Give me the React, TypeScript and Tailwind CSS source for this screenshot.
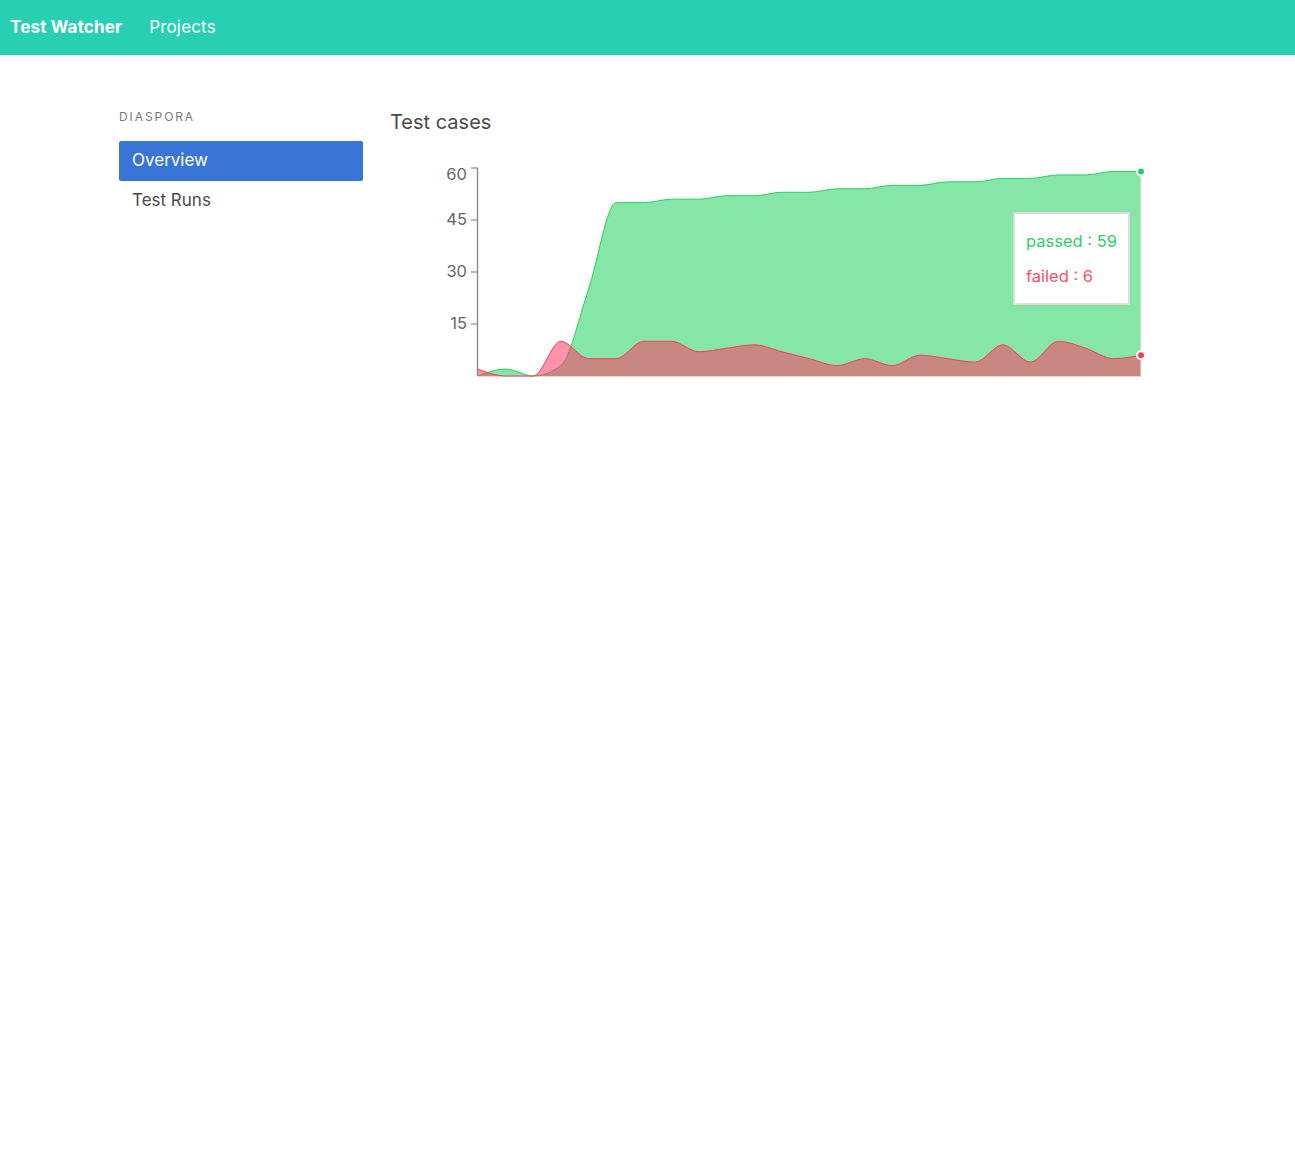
const passed = [0, 2, 0, 3, 25, 50, 50, 51, 51, 52, 52, 53, 53, 54, 54, 55, 55, 56, 56, 57, 57, 58, 58, 59, 59];
const failed = [2, 0, 0, 10, 5, 5, 10, 10, 7, 8, 9, 7, 5, 3, 5, 3, 6, 5, 4, 9, 4, 10, 8, 5, 6];

// plot box inside the svg
const X0 = 88;
const X1 = 751;
const BASE = 226;
const TOP = 18;
const PER = (BASE - TOP) / 60;

const toPoints = (values: number[]) =>
  values.map((v, i) => ({
    x: X0 + ((X1 - X0) / (values.length - 1)) * i,
    y: BASE - v * PER,
  }));

// same maths as d3 curveMonotoneX
function monotonePath(pts: { x: number; y: number }[]) {
  const n = pts.length;
  const sign = (v: number) => (v < 0 ? -1 : 1);
  const t: number[] = new Array(n).fill(0);
  for (let i = 1; i < n - 1; i++) {
    const h0 = pts[i].x - pts[i - 1].x;
    const h1 = pts[i + 1].x - pts[i].x;
    const s0 = (pts[i].y - pts[i - 1].y) / h0;
    const s1 = (pts[i + 1].y - pts[i].y) / h1;
    const p = (s0 * h1 + s1 * h0) / (h0 + h1);
    t[i] = (sign(s0) + sign(s1)) * Math.min(Math.abs(s0), Math.abs(s1), 0.5 * Math.abs(p)) || 0;
  }
  const h0 = pts[1].x - pts[0].x;
  t[0] = (3 * (pts[1].y - pts[0].y) / h0 - t[1]) / 2;
  const hn = pts[n - 1].x - pts[n - 2].x;
  t[n - 1] = (3 * (pts[n - 1].y - pts[n - 2].y) / hn - t[n - 2]) / 2;

  let d = `M${pts[0].x},${pts[0].y}`;
  for (let i = 0; i < n - 1; i++) {
    const a = pts[i];
    const b = pts[i + 1];
    const dx = (b.x - a.x) / 3;
    d += `C${a.x + dx},${a.y + dx * t[i]},${b.x - dx},${b.y - dx * t[i + 1]},${b.x},${b.y}`;
  }
  return d;
}

function TestCasesChart() {
  const passedLine = monotonePath(toPoints(passed));
  const failedLine = monotonePath(toPoints(failed));
  const close = `L${X1},${BASE}L${X0},${BASE}Z`;
  const ticks = [
    { v: 60, label: 24 },
    { v: 45, label: 69 },
    { v: 30, label: 121 },
    { v: 15, label: 173 },
  ];
  const lastPassed = BASE - passed[passed.length - 1] * PER;
  const lastFailed = BASE - failed[failed.length - 1] * PER;

  return (
    <div className="relative mt-[14px] h-[260px] w-[800px]">
      <svg width={800} height={260} className="block">
        <line x1={X0} y1={BASE + 0.5} x2={X1} y2={BASE + 0.5} stroke="#e3d6cf" />
        <path d={passedLine + close} fill="#23d160" fillOpacity={0.55} />
        <path d={passedLine} fill="none" stroke="#23d160" strokeWidth={1} />
        <path d={failedLine + close} fill="#ff3860" fillOpacity={0.55} />
        <path d={failedLine} fill="none" stroke="#ff3860" strokeWidth={1} />

        <line x1={X1} y1={lastPassed} x2={X1} y2={BASE} stroke="#e8e8e8" />

        <line x1={X0 - 0.5} y1={TOP} x2={X0 - 0.5} y2={BASE} stroke="#8a8a8a" strokeWidth={1.4} />
        {ticks.map((tk) => {
          const y = BASE - tk.v * PER;
          return (
            <g key={tk.v}>
              <line x1={X0 - 7} y1={y} x2={X0} y2={y} stroke="#8a8a8a" strokeWidth={1.2} />
              <text
                x={77}
                y={tk.label}
                textAnchor="end"
                dominantBaseline="central"
                fontSize={16.5}
                fill="#666"
              >
                {tk.v}
              </text>
            </g>
          );
        })}

        <circle cx={X1} cy={lastPassed} r={4} fill="#23d160" stroke="#fff" strokeWidth={2} />
        <circle cx={X1} cy={lastFailed} r={4} fill="#ff3860" stroke="#fff" strokeWidth={2} />
      </svg>

      {/* Tooltip */}
      <div className="absolute left-[623px] top-[62px] flex h-[93px] w-[117px] flex-col justify-center gap-[13px] border-2 border-[#dcdcdc] bg-white pl-[11px] text-[16.5px] leading-[22px]">
        <div className="text-[#2fce68]">passed : 59</div>
        <div className="text-[#f24f6e]">failed : 6</div>
      </div>
    </div>
  );
}

export default function App() {
  return (
    <div className="min-h-screen bg-white font-['Inter','Noto_Sans',sans-serif] text-[#4a4a4a]">
      {/* Navbar */}
      <nav className="flex h-[55px] items-center gap-[27px] bg-[#29cfb3] pl-[10px] text-[17px] text-white">
        <span className="font-bold tracking-[0.01em]">Test Watcher</span>
        <span className="tracking-[0.01em]">Projects</span>
      </nav>

      <div className="flex pl-[119px] pt-[53px]">
        {/* Sidebar */}
        <aside className="w-[244px]">
          <p className="text-[12px] leading-[18px] tracking-[0.16em] text-[#7a7a7a] uppercase">
            Diaspora
          </p>
          <ul className="mt-[15px] text-[17px]">
            <li className="flex h-[40px] items-center rounded-[2px] bg-[#3875d7] px-[13px] text-white">
              Overview
            </li>
            <li className="flex h-[39px] items-center px-[13px]">Test Runs</li>
          </ul>
        </aside>

        {/* Main */}
        <main className="ml-[27px]">
          <h2 className="text-[20px] leading-[28px]">Test cases</h2>
          <TestCasesChart />
        </main>
      </div>
    </div>
  );
}
